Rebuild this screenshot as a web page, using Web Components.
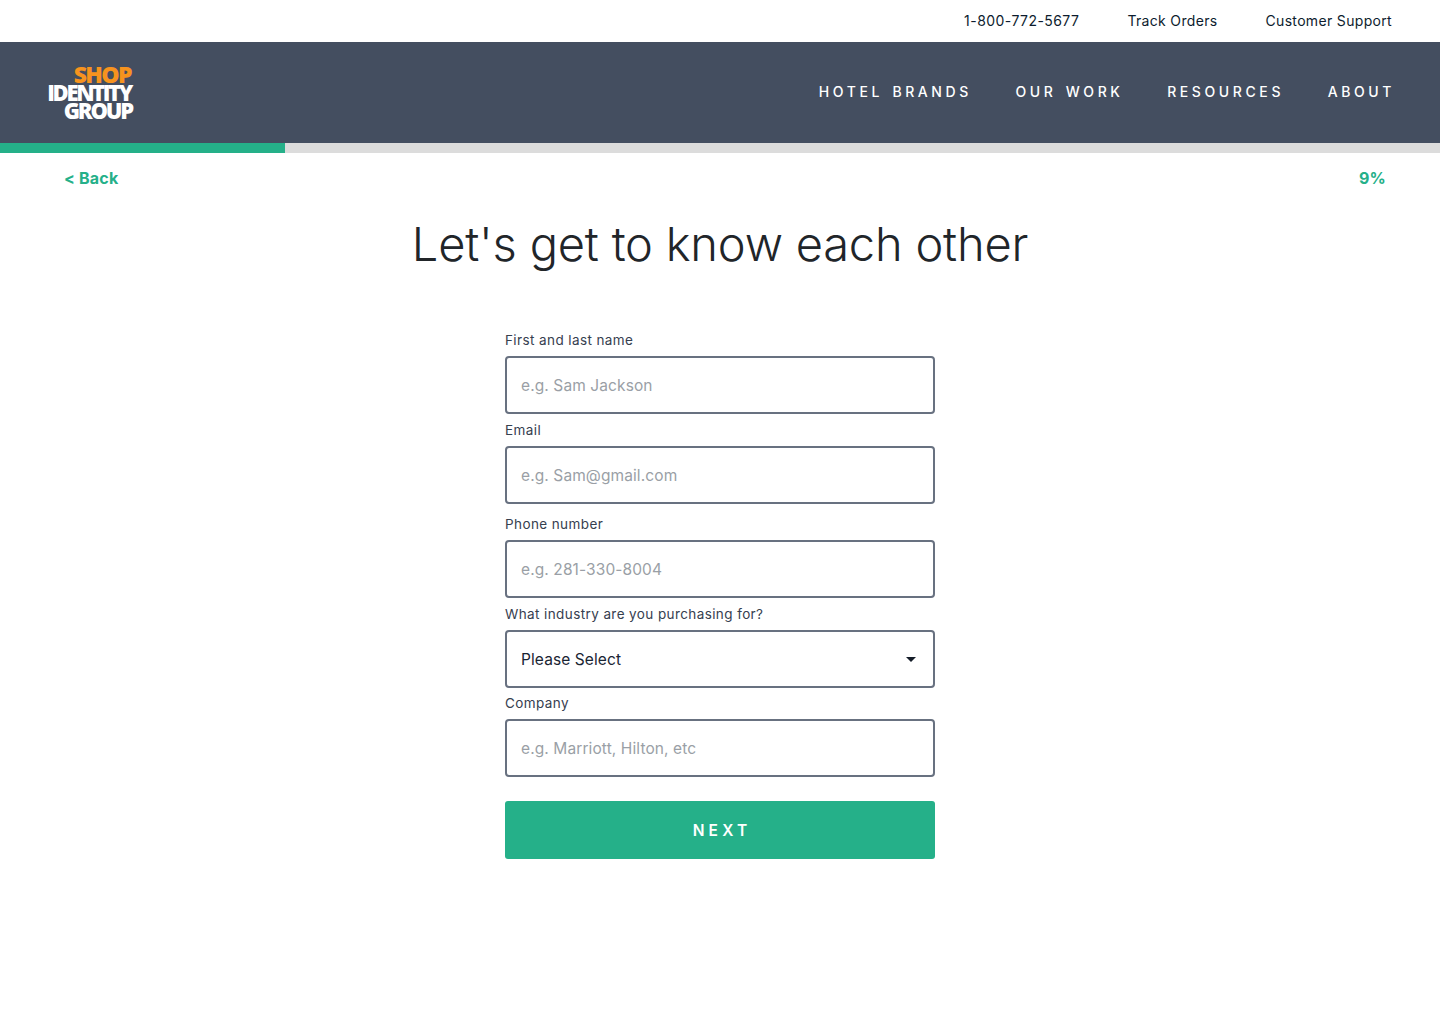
<!DOCTYPE html>
<html lang="en"><head><meta charset="utf-8"><title>Shop Identity Group</title>
<style>
html,body{margin:0;background:#fff}
body{font-family:Inter,"Noto Sans",sans-serif;color:#212529}
</style></head><body>
<sig-page></sig-page>
<script>
const FONT='Inter,"Noto Sans",sans-serif';
function def(name,html,init){
  customElements.define(name,class extends HTMLElement{
    constructor(){super();this.attachShadow({mode:'open'}).innerHTML=html;}
    connectedCallback(){if(init)init.call(this,this.shadowRoot);}
  });
}
def('sig-topbar',`<style>
:host{display:flex;justify-content:flex-end;align-items:center;height:42px;box-sizing:border-box;padding:0 48px 2px 0;gap:48px;font-size:14px;letter-spacing:.33px;color:#0d1c2e}
span{white-space:nowrap}
.p{letter-spacing:.45px}
</style><span class="p">1-800-772-5677</span><span>Track Orders</span><span>Customer Support</span>`);
def('sig-logo',`<style>
:host{display:block;width:88px;height:56px;font-family:"Open Sans",sans-serif;font-weight:800;font-size:22px;line-height:18px;letter-spacing:-1.6px;text-align:right;color:#fff}
div{white-space:nowrap;height:18px}
.o{color:#f7931e;font-size:23px;letter-spacing:-1.6px;margin-right:1px}
.t{letter-spacing:-2.35px;margin-right:1px}
.g{letter-spacing:-2.2px}
</style><div class="o">SHOP</div><div class="t">IDENTITY</div><div class="g">GROUP</div>`);
def('sig-header',`<style>
:host{display:flex;justify-content:space-between;align-items:center;height:101px;background:#444e60;box-sizing:border-box;padding:0 45px 0 44px}
nav{display:flex;gap:43.6px;color:#fff;font-size:14px;font-weight:500;letter-spacing:3.6px;word-spacing:2px;margin-top:-2px}
nav span{white-space:nowrap}
</style><sig-logo></sig-logo><nav><span>HOTEL BRANDS</span><span>OUR WORK</span><span>RESOURCES</span><span>ABOUT</span></nav>`);
def('sig-progress',`<style>
:host{display:block;height:10px;background:#dcdcdc}
div{height:100%;width:285px;background:#25b089}
</style><div></div>`);
def('sig-status',`<style>
:host{display:flex;justify-content:space-between;padding:15px 54px 0 64px;height:21px;font-size:16px;font-weight:700;line-height:21px;letter-spacing:.2px;color:#25b089}
</style><span>&lt; Back</span><span>9%</span>`);
def('sig-title',`<style>
:host{display:block;text-align:center;margin-top:27px;height:56px;font-size:47px;font-weight:300;line-height:56px;letter-spacing:-.2px;color:#212529;white-space:nowrap}
</style><slot></slot>`);
def('sig-field',`<style>
:host{display:block;width:430px;font-size:13.5px;letter-spacing:.4px;color:#36404f}
label{display:block;height:25px;line-height:18px}
.box{box-sizing:border-box;height:58px;border:2px solid #687180;border-radius:4px;padding:0 14px;display:flex;align-items:center;justify-content:space-between;font-size:15.5px;letter-spacing:.1px}
.ph{color:#9a9fa6}
.val{color:#1a2433}
.caret{width:0;height:0;border-left:5px solid transparent;border-right:5px solid transparent;border-top:5px solid #141c28;margin-right:3px}
</style><label></label><div class="box"><span></span></div>`,function(s){
  s.querySelector('label').textContent=this.getAttribute('label');
  const sp=s.querySelector('.box span');
  sp.textContent=this.getAttribute('text');
  sp.className=this.hasAttribute('select')?'val':'ph';
  if(this.hasAttribute('select')){const c=document.createElement('i');c.className='caret';s.querySelector('.box').append(c);}
});
def('sig-button',`<style>
:host{display:flex;box-sizing:border-box;padding-left:4px;width:430px;height:58px;background:#25b089;border-radius:3px;color:#fff;font-size:15.5px;font-weight:600;letter-spacing:4.2px;align-items:center;justify-content:center}
</style><slot></slot>`);
def('sig-form',`<style>
:host{display:flex;flex-direction:column;width:430px;margin:0 auto;padding-top:59px}
::slotted(sig-field.a){margin-top:7px}
::slotted(sig-field.b){margin-top:11px}
::slotted(sig-field.c){margin-top:6px}
::slotted(sig-button){margin-top:24px}
</style><slot></slot>`);
def('sig-page',`<style>
:host{display:block;width:1440px;height:1024px;overflow:hidden;background:#fff;font-family:${FONT};color:#212529}
</style>
<sig-topbar></sig-topbar><sig-header></sig-header><sig-progress></sig-progress><sig-status></sig-status>
<sig-title>Let's get to know each other</sig-title>
<sig-form>
<sig-field label="First and last name" text="e.g. Sam Jackson"></sig-field>
<sig-field class="a" label="Email" text="e.g. Sam@gmail.com"></sig-field>
<sig-field class="b" label="Phone number" text="e.g. 281-330-8004"></sig-field>
<sig-field class="a" label="What industry are you purchasing for?" text="Please Select" select></sig-field>
<sig-field class="c" label="Company" text="e.g. Marriott, Hilton, etc"></sig-field>
<sig-button>NEXT</sig-button>
</sig-form>`);
</script>
</body></html>
